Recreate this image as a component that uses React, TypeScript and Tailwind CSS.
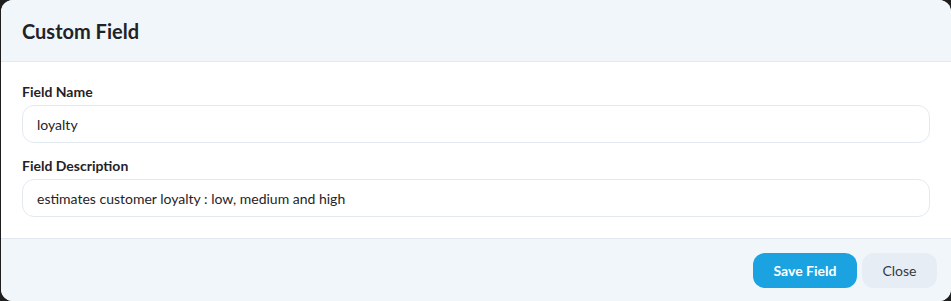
import React from "react";

const Field = ({ label, value }: { label: string; value: string }) => {
  return (
    <div className="flex flex-col">
      <label className="text-[14px] leading-5 font-bold text-[#1f2328] mb-[3px]">
        {label}
      </label>
      <div className="h-[38px] flex items-center px-[14px] rounded-xl border border-[#e3e9f0] bg-white text-[14px] text-[#1f2328]">
        {value}
      </div>
    </div>
  );
};

export default function App() {
  return (
    <div
      className="w-[951px] h-[301px] bg-[#1e1e1e] pl-px"
      style={{ fontFamily: "Lato, 'Noto Sans', sans-serif" }}
    >
      <div className="h-full bg-white rounded-xl overflow-hidden flex flex-col">
        <div className="h-[62px] shrink-0 bg-[#f1f6fa] border-b border-[#e2e8f0] flex items-center px-[21px]">
          <h1 className="text-[20px] font-bold text-[#1f2328]">Custom Field</h1>
        </div>
        <div className="flex flex-col gap-[13px] px-[21px] pt-5 pb-[21px] border-b border-[#e2e8f0]">
          <Field label="Field Name" value="loyalty" />
          <Field
            label="Field Description"
            value="estimates customer loyalty : low, medium and high"
          />
        </div>
        <div className="flex-1 bg-[#f1f6fa] flex justify-end items-start gap-[5px] pt-[14px] pr-[14px]">
          <button className="h-[35px] w-[104px] rounded-xl bg-[#1aa3e0] text-white text-[14px] font-bold">
            Save Field
          </button>
          <button className="h-[35px] w-[75px] rounded-xl bg-[#e6edf5] text-[#333a42] text-[14px]">
            Close
          </button>
        </div>
      </div>
    </div>
  );
}
